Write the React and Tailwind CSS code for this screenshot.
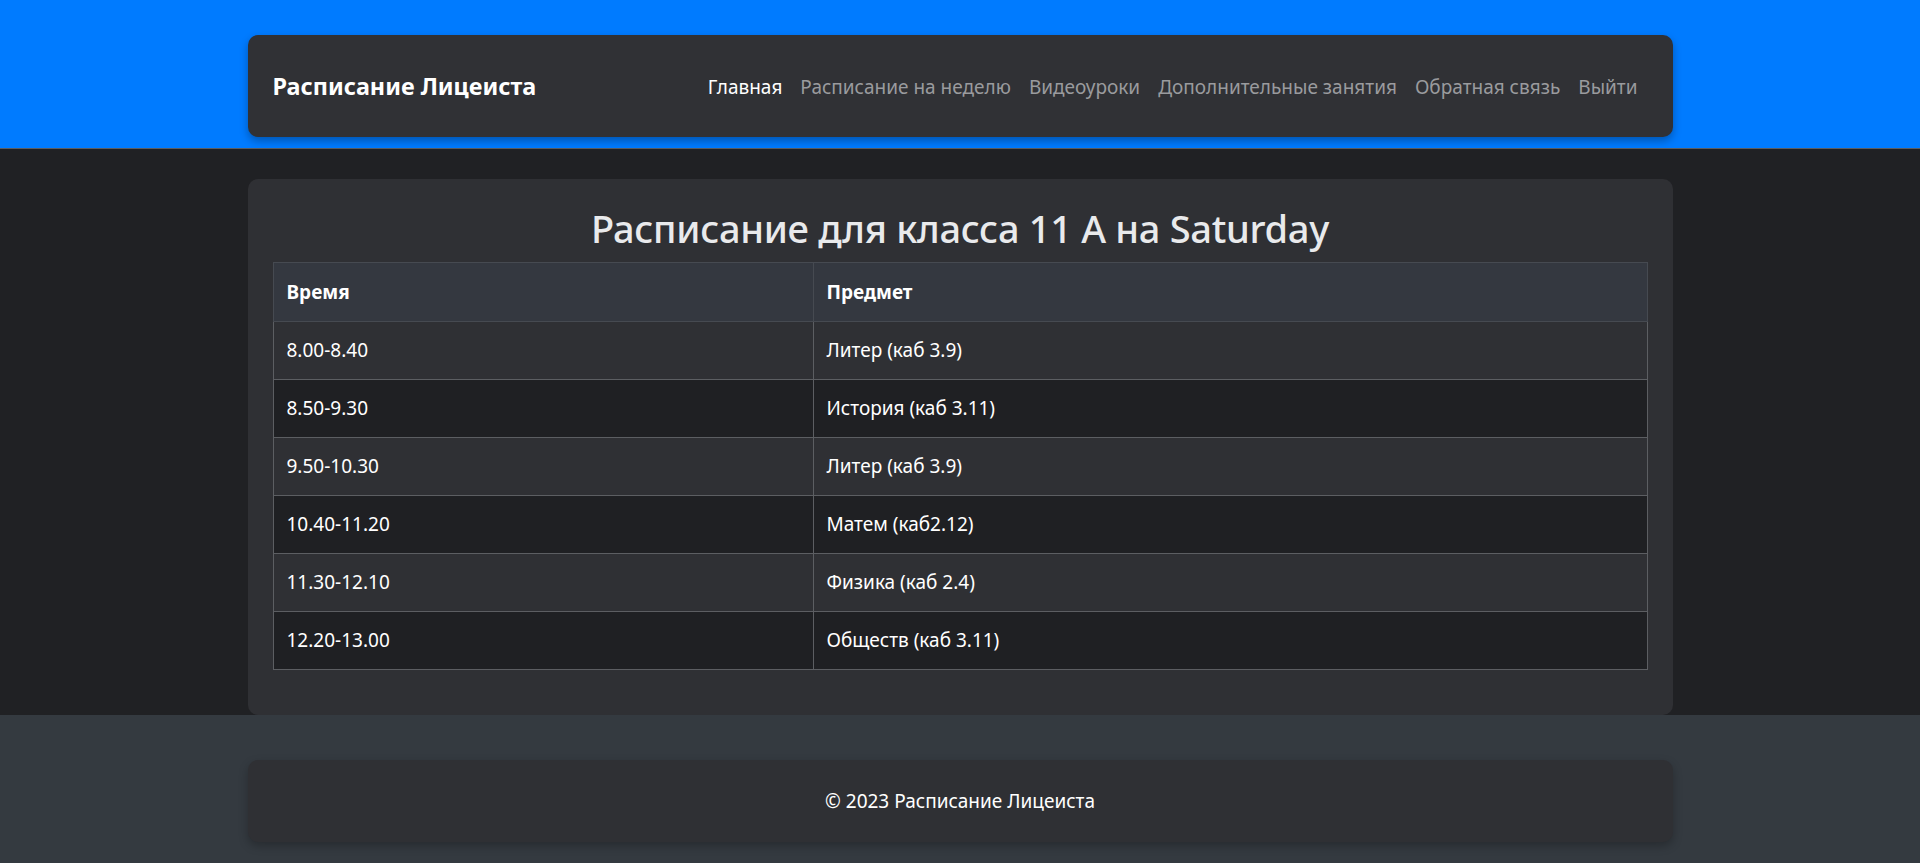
const links = [
  { label: "Главная", active: true },
  { label: "Расписание на неделю" },
  { label: "Видеоуроки" },
  { label: "Дополнительные занятия" },
  { label: "Обратная связь" },
  { label: "Выйти" },
];

const lessons = [
  ["8.00-8.40", "Литер (каб 3.9)"],
  ["8.50-9.30", "История (каб 3.11)"],
  ["9.50-10.30", "Литер (каб 3.9)"],
  ["10.40-11.20", "Матем (каб2.12)"],
  ["11.30-12.10", "Физика (каб 2.4)"],
  ["12.20-13.00", "Обществ (каб 3.11)"],
];

const App = () => {
  return (
    <div className="min-h-[863px] flex flex-col font-['Noto_Sans',sans-serif] text-white">
      <header className="bg-[#007bff] h-[149px] pt-[35px] border-b border-[#5a5d62]">
        <nav className="w-[1425px] mx-auto h-[102px] bg-[#303135] rounded-[10px] shadow-[0_4px_8px_rgba(0,0,0,0.3)] flex items-center justify-between pl-[25px] pr-[35px] pt-[2px]">
          <a className="text-[23.4px] font-bold">Расписание Лицеиста</a>
          <ul className="flex items-center gap-[18px]">
            {links.map((l) => (
              <li key={l.label}>
                <a className={`text-[19px] ${l.active ? "text-white" : "text-[#9a9b9e]"}`}>
                  {l.label}
                </a>
              </li>
            ))}
          </ul>
        </nav>
      </header>

      <main className="bg-[#202124] pt-[30px]">
        <div className="w-[1425px] mx-auto bg-[#2f3034] rounded-[10px] px-[25px] pt-[25px] pb-[45px]">
          <h1 className="text-center text-[38px] leading-[48px] font-medium text-[#e9eaec] mb-[10px] tracking-[-0.3px]">
            Расписание для класса 11 А на Saturday
          </h1>
          <table className="w-full border-collapse text-[19px]">
            <thead>
              <tr className="bg-[#343840] h-[59px]">
                <th className="w-[540px] text-left font-bold px-[13px] border border-[#464a51]">Время</th>
                <th className="text-left font-bold px-[13px] border border-[#464a51]">Предмет</th>
              </tr>
            </thead>
            <tbody>
              {lessons.map(([time, subject], i) => (
                <tr key={time} className={`h-[58px] ${i % 2 === 0 ? "bg-[#2f3034]" : "bg-[#1f2023]"}`}>
                  <td className="px-[13px] border border-[#5c5e62]">{time}</td>
                  <td className="px-[13px] border border-[#5c5e62]">{subject}</td>
                </tr>
              ))}
            </tbody>
          </table>
        </div>
      </main>

      <footer className="bg-[#343a40] flex-1 pt-[45px] pb-[21px] border-b-2 border-[#1a1b1e]">
        <div className="w-[1425px] mx-auto h-[82px] bg-[#2f3034] rounded-[10px] shadow-[0_4px_10px_rgba(0,0,0,0.25)] flex items-center justify-center">
          <p className="text-[19px]">© 2023 Расписание Лицеиста</p>
        </div>
      </footer>
    </div>
  );
};

export default App;
